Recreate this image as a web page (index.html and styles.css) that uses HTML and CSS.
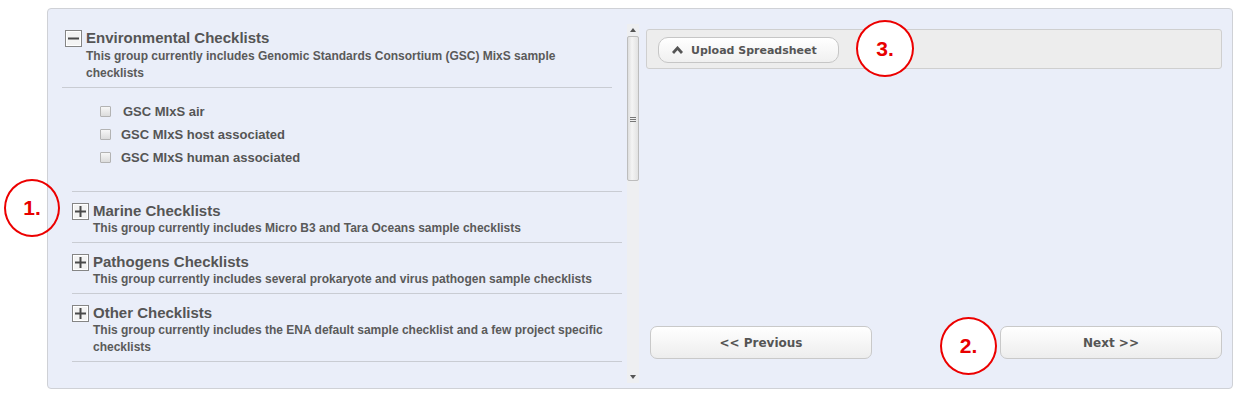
FILE: index.html
```html
<!DOCTYPE html>
<html>
<head>
<meta charset="utf-8">
<link rel="stylesheet" href="styles.css">
</head>
<body>
<div class="page">
  <div class="panel">
    <div class="left">
      <div class="list">
        <div class="group env">
          <div class="ghead">
            <svg class="toggle" width="17" height="17" viewBox="0 0 17 17"><rect x="0.5" y="0.5" width="16" height="16" fill="#f3f3f3" stroke="#858585"/><rect x="1.5" y="1.5" width="14" height="14" fill="none" stroke="#ffffff"/><rect x="3" y="7.5" width="11" height="2" fill="#4a4a4a"/></svg>
            <span class="gtitle">Environmental Checklists</span>
          </div>
          <div class="gdesc">This group currently includes Genomic Standards Consortium (GSC) MixS sample checklists</div>
        </div>
        <div class="checks">
          <label class="check first"><span class="box"></span><span class="clabel">GSC MIxS air</span></label>
          <label class="check"><span class="box"></span><span class="clabel">GSC MIxS host associated</span></label>
          <label class="check"><span class="box"></span><span class="clabel">GSC MIxS human associated</span></label>
        </div>
        <div class="group sub topline">
          <div class="ghead">
            <svg class="toggle" width="17" height="17" viewBox="0 0 17 17"><rect x="0.5" y="0.5" width="16" height="16" fill="#f3f3f3" stroke="#858585"/><rect x="1.5" y="1.5" width="14" height="14" fill="none" stroke="#ffffff"/><rect x="3" y="7.5" width="11" height="2" fill="#4a4a4a"/><rect x="7.5" y="3" width="2" height="11" fill="#4a4a4a"/></svg>
            <span class="gtitle">Marine Checklists</span>
          </div>
          <div class="gdesc">This group currently includes Micro B3 and Tara Oceans sample checklists</div>
        </div>
        <div class="group sub">
          <div class="ghead">
            <svg class="toggle" width="17" height="17" viewBox="0 0 17 17"><rect x="0.5" y="0.5" width="16" height="16" fill="#f3f3f3" stroke="#858585"/><rect x="1.5" y="1.5" width="14" height="14" fill="none" stroke="#ffffff"/><rect x="3" y="7.5" width="11" height="2" fill="#4a4a4a"/><rect x="7.5" y="3" width="2" height="11" fill="#4a4a4a"/></svg>
            <span class="gtitle">Pathogens Checklists</span>
          </div>
          <div class="gdesc">This group currently includes several prokaryote and virus pathogen sample checklists</div>
        </div>
        <div class="group sub">
          <div class="ghead">
            <svg class="toggle" width="17" height="17" viewBox="0 0 17 17"><rect x="0.5" y="0.5" width="16" height="16" fill="#f3f3f3" stroke="#858585"/><rect x="1.5" y="1.5" width="14" height="14" fill="none" stroke="#ffffff"/><rect x="3" y="7.5" width="11" height="2" fill="#4a4a4a"/><rect x="7.5" y="3" width="2" height="11" fill="#4a4a4a"/></svg>
            <span class="gtitle">Other Checklists</span>
          </div>
          <div class="gdesc">This group currently includes the ENA default sample checklist and a few project specific checklists</div>
        </div>
      </div>
      <div class="scrollbar">
        <div class="sarrow"><svg width="6" height="4" viewBox="0 0 6 4"><path d="M0 4 L3 0 L6 4 Z" fill="#555"/></svg></div>
        <div class="thumb"><span class="grip"></span></div>
        <div class="strack"></div>
        <div class="sarrow down"><svg width="6" height="4" viewBox="0 0 6 4"><path d="M0 0 L3 4 L6 0 Z" fill="#555"/></svg></div>
      </div>
    </div>
    <div class="right">
      <div class="uploadbar">
        <button class="upload"><svg class="chev" width="11" height="8" viewBox="0 0 11 8"><path d="M1 7 L5.5 2 L10 7" fill="none" stroke="#555" stroke-width="2.8"/></svg><span>Upload Spreadsheet</span></button>
      </div>
      <div class="nav">
        <button class="navbtn">&lt;&lt; Previous</button>
        <button class="navbtn">Next &gt;&gt;</button>
      </div>
    </div>
  </div>
  <div class="anno a1">1.</div>
  <div class="anno a2">2.</div>
  <div class="anno a3">3.</div>
</div>
</body>
</html>
```
FILE: styles.css
```css
* { box-sizing: border-box; }
html, body { margin: 0; padding: 0; background: #ffffff; }
body { font-family: "Liberation Sans", Arial, sans-serif; color: #555555; }

.page {
  position: relative;
  width: 1245px;
  height: 403px;
  padding: 8px 0 0 47px;
}

.panel {
  width: 1186px;
  height: 381px;
  border: 1px solid #cfd1d6;
  border-radius: 4px;
  background: #eaeef9;
  padding: 15px 10px 5px 12px;
  display: flex;
  gap: 6px;
}

.left {
  width: 580px;
  height: 359px;
  display: flex;
}

.list {
  flex: 1;
  overflow: hidden;
}

.group { width: 550px; }
.group.env {
  margin-left: 2px;
  padding: 6px 0 5px 3px;
  border-bottom: 1px solid #c9ccd3;
}
.group.sub {
  margin-left: 12px;
  padding: 11px 0 5px 0;
  border-bottom: 1px solid #c9ccd3;
}
.group.topline { border-top: 1px solid #c9ccd3; }

.ghead {
  display: flex;
  align-items: center;
  height: 16px;
  gap: 4px;
}
.toggle { display: block; flex: none; }
.gtitle {
  font-weight: bold;
  font-size: 15px;
  line-height: 16px;
  color: #555555;
}
.gdesc {
  font-size: 12px;
  font-weight: bold;
  line-height: 17px;
  color: #5a5a5a;
  margin-left: 21px;
  padding-top: 1px;
  padding-right: 8px;
}
.env .gdesc {
  margin-top: 1px;
  margin-left: 21px;
  padding-right: 30px;
}

.checks {
  padding: 12px 0 22px 40px;
  display: flex;
  flex-direction: column;
}
.check {
  display: flex;
  align-items: center;
  height: 23px;
  gap: 10px;
}
.box {
  width: 11px;
  height: 11px;
  border: 1px solid #b3b3b3;
  border-radius: 1px;
  background: linear-gradient(#f7f7f7, #dcdcdc);
}
.clabel {
  font-size: 13px;
  font-weight: bold;
  color: #555555;
}
.check.first .clabel { margin-left: 2px; }

.scrollbar {
  width: 12px;
  margin-right: 1px;
  background: #eeeff1;
  display: flex;
  flex-direction: column;
}
.sarrow {
  height: 11px;
  display: flex;
  align-items: center;
  justify-content: center;
}
.sarrow.down { height: 13px; }
.thumb {
  height: 145px;
  margin: 1px 0 0 0;
  border: 1px solid #bdbdbd;
  border-radius: 2px;
  background: linear-gradient(90deg, #dedede, #f4f4f4 40%, #e2e2e2);
  display: flex;
  justify-content: center;
  padding-top: 80px;
}
.grip {
  width: 6px;
  height: 6px;
  background: repeating-linear-gradient(#777 0 1px, transparent 1px 2px);
}
.strack { flex: 1; }

.right {
  width: 576px;
  height: 359px;
  display: flex;
  flex-direction: column;
}

.uploadbar {
  margin-top: 5px;
  height: 40px;
  background: #ededed;
  border: 1px solid #cfcfcf;
  border-radius: 3px;
  padding: 7px 0 0 11px;
}
.upload {
  width: 181px;
  height: 26px;
  border: 1px solid #c6c6c6;
  border-radius: 10px;
  background: linear-gradient(#ffffff, #f0f0f0);
  display: flex;
  align-items: center;
  padding: 0 0 0 13px;
  gap: 8px;
  font-family: "DejaVu Sans", Verdana, sans-serif;
  font-weight: bold;
  font-size: 11px;
  color: #555555;
}
.chev { display: block; }

.nav {
  margin-top: auto;
  margin-bottom: 24px;
  padding-left: 4px;
  display: flex;
  justify-content: space-between;
}
.navbtn {
  width: 222px;
  height: 33px;
  border: 1px solid #c9c9c9;
  border-radius: 7px;
  background: linear-gradient(#ffffff, #ededed);
  font-family: "DejaVu Sans", Verdana, sans-serif;
  font-weight: bold;
  font-size: 12px;
  color: #555555;
}

.anno {
  position: absolute;
  border: 2.5px solid #ec0000;
  border-radius: 50%;
  display: flex;
  align-items: center;
  justify-content: center;
  font-family: "Liberation Sans", Arial, sans-serif;
  font-weight: bold;
  font-size: 21px;
  color: #e80000;
  background: #ffffff;
}
.a1 { left: 4px; top: 179px; width: 56px; height: 58px; background: transparent; }
.a2 { left: 940px; top: 317px; width: 57px; height: 58px; }
.a3 { left: 856px; top: 20px; width: 58px; height: 57px; }
```
